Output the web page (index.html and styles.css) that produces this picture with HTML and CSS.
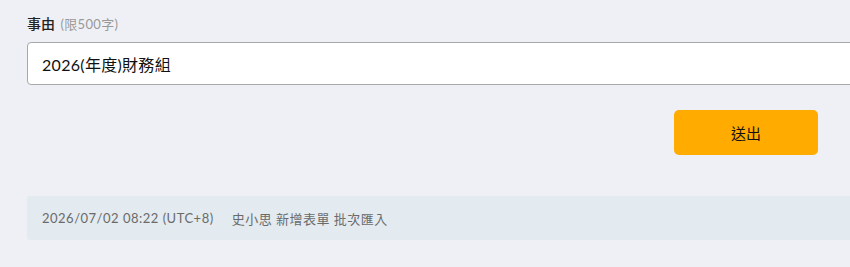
FILE: index.html
```html
<!DOCTYPE html>
<html lang="zh-Hant">
<head>
<meta charset="utf-8">
<link rel="stylesheet" href="styles.css">
</head>
<body>
<div class="page">
  <div class="field">
    <div class="label">事由 <span class="hint">(限500字)</span></div>
    <div class="input">2026(年度)財務組</div>
  </div>
  <div class="actions">
    <button class="submit">送出</button>
  </div>
  <div class="log">
    <span class="time">2026/07/02 08:22 (UTC+8)</span>
    <span class="msg">史小思 新增表單 批次匯入</span>
  </div>
</div>
</body>
</html>
```
FILE: styles.css
```css
html, body {
  margin: 0;
  padding: 0;
  background: #eff0f5;
  overflow: hidden;
}
body {
  font-family: Lato, "Noto Sans CJK TC", sans-serif;
  width: 850px;
  height: 267px;
}
.page {
  padding: 14px 0 0 27px;
  width: 823px;
  overflow: hidden;
}
.field {
  display: flex;
  flex-direction: column;
  gap: 8px;
  width: 900px;
}
.label {
  font-size: 14px;
  line-height: 19px;
  color: #222;
  font-weight: 500;
}
.hint {
  font-size: 13px;
  color: #999;
  font-weight: 400;
  margin-left: 2px;
  letter-spacing: 0.3px;
}
.input {
  box-sizing: border-box;
  height: 43px;
  background: #fff;
  border: 1px solid #a8a8a8;
  border-radius: 4px;
  padding: 0 14px;
  display: flex;
  align-items: center;
  font-size: 16px;
  letter-spacing: 0.3px;
  color: #111;
}
.actions {
  width: 791px;
  display: flex;
  justify-content: flex-end;
  margin-top: 25px;
}
.submit {
  width: 144px;
  height: 45px;
  border: none;
  border-radius: 5px;
  background: #ffab00;
  font-family: Lato, "Noto Sans CJK TC", sans-serif;
  font-size: 15px;
  color: #111;
  padding: 0;
}
.log {
  margin-top: 41px;
  width: 900px;
  height: 44px;
  box-sizing: border-box;
  background: #e3eaf0;
  border-radius: 3px;
  padding: 0 15px;
  display: flex;
  align-items: center;
  gap: 18px;
  font-size: 13px;
  color: #6a6a6a;
  letter-spacing: 0.5px;
}
```
